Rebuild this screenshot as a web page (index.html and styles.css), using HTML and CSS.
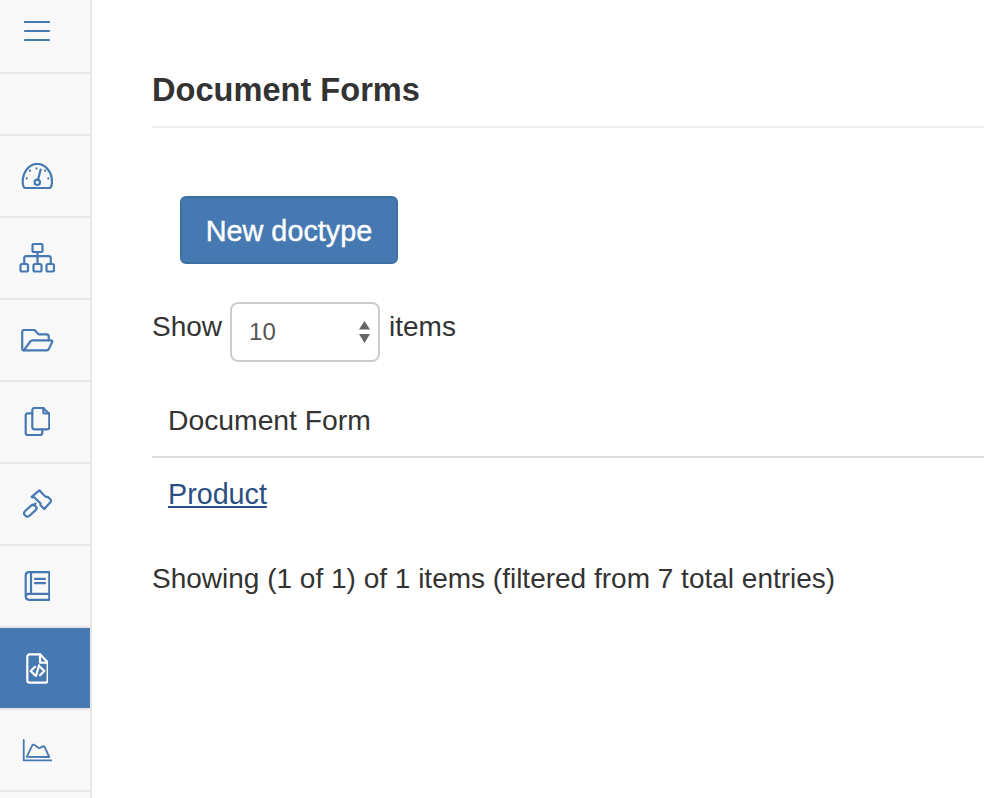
FILE: index.html
```html
<!DOCTYPE html>
<html lang="en">
<head>
<meta charset="utf-8">
<title>Document Forms</title>
<link rel="stylesheet" href="styles.css">
</head>
<body>
<div class="app">
<nav class="sidebar">
  <a class="nav-item top"><svg class="ico" width="26" height="20" viewBox="0 0 26 20"><path d="M1 1h24M1 10h24M1 19h24"/></svg></a>
  <a class="nav-item blank"></a>
  <a class="nav-item"><svg class="ico" width="32" height="26" viewBox="0 0 32 26"><path d="M4.500 25h23.300c1.900 0 3.200-2 3.200-6.500C31 9 24.500 1 16.300 1S1.700 9 1.700 18.500c0 4.500 1 6.500 2.800 6.500z"/><circle cx="16.300" cy="19.300" r="2.700"/><path d="M17 16.700L19.700 6.500"/><path d="M9 7.700v.1M15.500 5.300v.1M24 7.700v.1M5.700 15.300v.1M27.300 15.300v.1"/></svg></a>
  <a class="nav-item"><svg class="ico" width="36" height="30" viewBox="0 0 36 30"><rect x="13.500" y="1" width="10" height="8" rx="1.500"/><rect x="1.500" y="21" width="7.500" height="7.500" rx="1.500"/><rect x="14.500" y="21" width="8" height="7.500" rx="1.500"/><rect x="27.500" y="21" width="7.500" height="7.500" rx="1.500"/><path d="M18.500 9v12M5.200 21v-5.500c0-1.400.9-2.300 2.300-2.300h22c1.400 0 2.300.9 2.300 2.300V21"/></svg></a>
  <a class="nav-item"><svg class="ico" width="33" height="23" viewBox="0 0 33 23"><path d="M3 21.300c-1.200 0-1.800-.8-1.800-1.800V3c0-1.200.8-2 2-2h10.300l4 4.300h8.200c1.200 0 2 .8 2 2v4"/><path d="M2.800 21.300l6.500-8.800c.6-.8 1.200-1.200 2-1.200H30c1 0 1.500.7 1.200 1.600l-3.300 7c-.5.9-1.200 1.400-2.200 1.400z"/></svg></a>
  <a class="nav-item"><svg class="ico" width="26" height="30" viewBox="0 0 26 30"><path d="M10.500 1H19.300L25.300 7V20c0 1.500-1 2.300-2.300 2.300H10.500c-1.300 0-2.200-1-2.200-2.300V3.300c0-1.300 1-2.300 2.200-2.300z"/><path d="M19.300 1v4.500c0 .6.4 1 1 1h5"/><path d="M8.300 6.300H4c-1.300 0-2.300 1-2.300 2.300V25.700c0 1.300 1 2.300 2.300 2.300h12c1.300 0 2.300-1 2.300-2.300V22.300"/></svg></a>
  <a class="nav-item"><svg class="ico" width="30" height="30" viewBox="0 0 30 30"><path d="M17.300 1.300l3.200 3.500 3.500 3.200 1.700-.2 4 3.900-7.400 8.300-3.800-3.800.1-1.700-3.500-3.500-3.300-3-1.500.3-.6-.4z"/><path d="M13.500 14.500l-2 2"/><rect x="1.300" y="18.500" width="14" height="6.400" rx="3" transform="rotate(-42 8.300 21.700)"/></svg></a>
  <a class="nav-item"><svg class="ico" width="26" height="30" viewBox="0 0 26 30"><path d="M25.300 1.200H5c-2 0-3.300 1.300-3.300 3.300V25c0 2.300 1.500 3.800 3.500 3.800h20.100v-6H5c-2 0-3.300 1-3.300 2.700"/><path d="M25.300 1.200v21.600M7 1.200v21.600M11 7.800h10M11 12.200h10"/></svg></a>
  <a class="nav-item active"><svg class="ico" width="22" height="31" viewBox="0 0 22 31"><path d="M14 1.300H3.800c-1.500 0-2.500 1-2.500 2.500v23.400c0 1.500 1 2.500 2.500 2.500h15.400c1.500 0 2.500-1 2.500-2.500V9.300z"/><path d="M14 1.300v8.400h7.700"/><path d="M9 13.700L4.700 18 9 22.300M14 13.700l4.300 4.300L14 22.300M13 12.400L10 23"/></svg></a>
  <a class="nav-item"><svg class="ico thin" width="30" height="23" viewBox="0 0 30 23"><path d="M1.700 1v20.300h28"/><path d="M4.700 17.800l5.300-11c.6-1.200 1.500-1.400 2.500-.7l4.800 3.200 3-1.700c1-.6 1.800-.4 2.400.6L27.300 18z"/></svg></a>
</nav>
<main class="content">
  <h1 class="title">Document Forms</h1>
  <div class="actions"><a class="btn">New doctype</a></div>
  <div class="length">
    <span>Show</span>
    <span class="select">10<svg class="arrows" width="11" height="22" viewBox="0 0 11 22"><path d="M5.500 0l5.500 8.500H0zM5.500 22L0 13h11z"/></svg></span>
    <span class="after">items</span>
  </div>
  <table class="table">
    <thead><tr><th>Document Form</th></tr></thead>
    <tbody><tr><td><a class="link">Product</a></td></tr></tbody>
  </table>
  <p class="info">Showing (1 of 1) of 1 items (filtered from 7 total entries)</p>
</main>
</div>
</body>
</html>
```
FILE: styles.css
```css
* { box-sizing: border-box; }
html, body { margin: 0; height: 100%; overflow: hidden; }
body { background: #fff; color: #333; font-family: "Liberation Sans", Arial, sans-serif; font-size: 28px; }
.app { display: flex; height: 798px; }
.sidebar { width: 92px; flex: none; background: #f8f8f8; border-right: 2px solid #e7e7e7; display: flex; flex-direction: column; }
.nav-item { height: 82px; flex: none; border-bottom: 2px solid #e7e7e7; display: flex; align-items: center; justify-content: center; padding-right: 16px; }
.nav-item.top { height: 74px; padding-bottom: 10px; }
.nav-item.blank { height: 62px; }
.nav-item.active { background: #4679b2; }
.ico { fill: none; stroke: #4679b2; stroke-width: 2.200; stroke-linecap: round; stroke-linejoin: round; }
.ico.thin { stroke-width: 1.800; }
.active .ico { stroke: #fff; }
.content { flex: 1; min-width: 0; padding-left: 60px; }
.title { margin: 0; height: 128px; padding-top: 69px; font-size: 32.600px; line-height: 42px; font-weight: 700; border-bottom: 2px solid #eee; color: #333; }
.actions { padding: 68px 0 0 28px; }
.btn { display: inline-flex; align-items: center; justify-content: center; width: 218px; height: 68px; padding-top: 2px; background: #4679b2; border: 2px solid #3f6ea3; border-radius: 6px; color: #fff; font-size: 28.800px; -webkit-text-stroke: 0.400px #fff; }
.length { display: flex; align-items: center; gap: 8px; margin-top: 38px; height: 60px; line-height: 50px; }
.length span:first-child, .length span:last-child { position: relative; top: -5px; }
.length .after { margin-left: 1px; }
.select { width: 150px; height: 60px; border: 2px solid #ccc; border-radius: 8px; padding: 0 8px 0 17px; display: flex; align-items: center; justify-content: space-between; color: #555; font-size: 24px; background: #fff; }
.arrows { fill: #666; }
.table { width: 100%; border-collapse: collapse; margin-top: 18px; }
.table th { text-align: left; font-weight: 400; font-size: 28.300px; height: 77px; padding: 5px 16px 0; border-bottom: 2px solid #ddd; }
.table td { height: 74px; padding: 0 16px; }
.link { color: #2a5082; text-decoration: underline; font-size: 28.700px; }
.info { margin: 28px 0 0; line-height: 40px; }
```
